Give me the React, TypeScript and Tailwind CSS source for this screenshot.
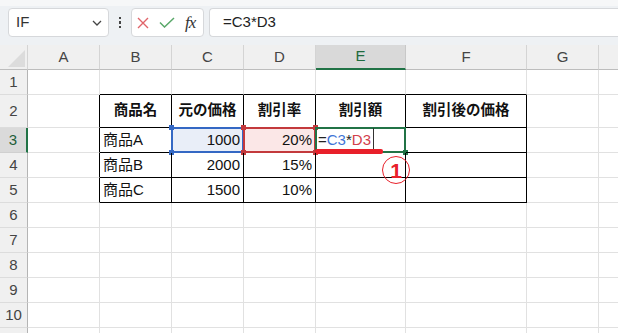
import React from 'react'

const COLS = ['A', 'B', 'C', 'D', 'E', 'F', 'G', '']
const WIDTHS = ['w-[72px]', 'w-[72px]', 'w-[72px]', 'w-[72px]', 'w-[90px]', 'w-[121px]', 'w-[72px]', 'w-[100px]']

type Cell = { text?: string; bold?: boolean; align?: 'left' | 'right' | 'center' }

const data: Record<number, Cell[]> = {
  2: [{}, { text: '商品名', bold: true, align: 'center' }, { text: '元の価格', bold: true, align: 'center' }, { text: '割引率', bold: true, align: 'center' }, { text: '割引額', bold: true, align: 'center' }, { text: '割引後の価格', bold: true, align: 'center' }],
  3: [{}, { text: '商品A' }, { text: '1000', align: 'right' }, { text: '20%', align: 'right' }, {}, {}],
  4: [{}, { text: '商品B' }, { text: '2000', align: 'right' }, { text: '15%', align: 'right' }, {}, {}],
  5: [{}, { text: '商品C' }, { text: '1500', align: 'right' }, { text: '10%', align: 'right' }, {}, {}],
}

const ROWS = [1, 2, 3, 4, 5, 6, 7, 8, 9, 10, 11]

function borderClass(row: number, col: number) {
  const inTable = row >= 2 && row <= 5 && col >= 1 && col <= 5
  if (inTable) return 'border-r border-b border-r-black border-b-black'
  if (row >= 2 && row <= 5 && col === 0) return 'border-r border-b border-r-black border-b-[#e1e1e1]'
  if (row === 1 && col >= 1 && col <= 5) return 'border-r border-b border-r-[#e1e1e1] border-b-black'
  return 'border-r border-b border-[#e1e1e1]'
}

function Handle({ className }: { className: string }) {
  return <div className={`absolute w-[5px] h-[5px] ${className}`} />
}

function Overlay({ row, col }: { row: number; col: number }) {
  if (row !== 3) return null
  if (col === 2)
    return (
      <div className="absolute left-[-1px] top-[-1px] w-[73px] h-[26px] border-2 border-[#3468c4]">
        <Handle className="left-[-4px] top-[-4px] bg-[#3468c4]" />
        <Handle className="left-[-4px] bottom-[-4px] bg-[#3468c4]" />
      </div>
    )
  if (col === 3)
    return (
      <div className="absolute left-[-1px] top-[-1px] w-[73px] h-[26px] border-2 border-[#c3393c]">
        <Handle className="left-[-4px] top-[-4px] bg-[#c3393c]" />
        <Handle className="left-[-4px] bottom-[-4px] bg-[#c3393c]" />
        <Handle className="right-[-4px] top-[-4px] bg-[#c3393c]" />
        <Handle className="right-[-4px] bottom-[-4px] bg-[#c3393c]" />
      </div>
    )
  if (col === 4)
    return (
      <>
        <div className="absolute left-[-1px] top-[-1px] w-[91px] h-[26px] border-2 border-[#217346]">
          <Handle className="right-[-4px] bottom-[-4px] bg-[#217346]" />
        </div>
        <div className="absolute left-[2px] top-0 h-[24px] flex items-center text-[15px] text-[#222]">
          <span>=</span>
          <span className="text-[#3f74d6]">C3</span>
          <span>*</span>
          <span className="text-[#d2404a]">D3</span>
        </div>
        <div className="absolute left-[57px] top-0 h-[23px] w-px bg-[#333]" />
        <div className="absolute left-[-1px] top-[21px] w-[68px] h-[5px] rounded-[2px] bg-[#e8202a]" />
        <div className="absolute left-[66px] top-[28px] w-[28px] h-[28px] rounded-full border-[1.5px] border-[#e8202a] flex items-center justify-center text-[#e8202a] text-[21px] font-bold leading-none z-10">
          1
        </div>
      </>
    )
  return null
}

export default function App() {
  return (
    <div className="w-[618px] h-[333px] overflow-hidden bg-white font-['Liberation_Sans','Noto_Sans_CJK_JP',sans-serif] text-[#222]">
      {/* formula bar */}
      <div className="h-[45px] bg-[#eef1f4] border-t-[6px] border-[#f6f7f8] flex items-start pt-[2px] pl-[8px]">
        <div className="w-[101px] h-[29px] bg-white rounded-[4px] border border-[#d6d8db] flex items-center pl-[7px] pr-[6px]">
          <span className="text-[15px] text-[#333] flex-1">IF</span>
          <svg width="10" height="6" viewBox="0 0 10 6" fill="none" stroke="#444" strokeWidth="1.3">
            <path d="M1 1l4 4 4-4" />
          </svg>
        </div>
        <div className="w-[22px] h-[29px] flex flex-col items-center justify-center gap-[2px]">
          <div className="w-[2.5px] h-[2.5px] bg-[#444]" />
          <div className="w-[2.5px] h-[2.5px] bg-[#444]" />
          <div className="w-[2.5px] h-[2.5px] bg-[#444]" />
        </div>
        <div className="w-[73px] h-[29px] bg-white rounded-[4px] border border-[#d6d8db] flex items-center pl-[5px] gap-[10px]">
          <svg width="12" height="12" viewBox="0 0 12 12" stroke="#e0646a" strokeWidth="1.4" fill="none">
            <path d="M1 1l10 10M11 1L1 11" />
          </svg>
          <svg width="16" height="11" viewBox="0 0 16 11" stroke="#5aa86a" strokeWidth="1.5" fill="none">
            <path d="M1 5.5l4.5 4.5L15 1" />
          </svg>
          <span className="font-['Liberation_Serif',serif] italic text-[17px] text-[#333] leading-none tracking-[-1px]">fx</span>
        </div>
        <div className="ml-[5px] flex-1 h-[29px] bg-white rounded-l-[4px] border border-r-0 border-[#d6d8db] flex items-center pl-[13px]">
          <span className="text-[15px] text-[#222]">=C3*D3</span>
        </div>
      </div>

      {/* column headers */}
      <div className="flex h-[25px]">
        <div className="w-[28px] shrink-0 bg-[#f0f0f0] border-r border-b border-r-[#d4d4d4] border-b-[#bdbdbd] relative overflow-hidden">
          <svg className="absolute right-[2px] bottom-[2px]" width="17" height="17" viewBox="0 0 17 17">
            <path d="M17 0V17H0Z" fill="#dcdcdc" />
          </svg>
        </div>
        {COLS.map((c, i) =>
          c === 'E' ? (
            <div key={i} className={`${WIDTHS[i]} shrink-0 bg-[#d9d9d9] border-r border-b-2 border-r-[#c8c8c8] border-b-[#217346] flex items-center justify-center text-[15px] text-[#1e6b3e]`}>
              {c}
            </div>
          ) : (
            <div key={i} className={`${WIDTHS[i]} shrink-0 bg-[#f0f0f0] border-r border-b border-r-[#d4d4d4] border-b-[#bdbdbd] flex items-center justify-center text-[15px] text-[#444]`}>
              {c}
            </div>
          )
        )}
      </div>

      {/* rows */}
      {ROWS.map((r) => (
        <div key={r} className={`flex ${r === 2 ? 'h-[33px]' : 'h-[25px]'}`}>
          {r === 3 ? (
            <div className="w-[28px] shrink-0 bg-[#dadada] border-r-2 border-b border-r-[#217346] border-b-[#d0d0d0] flex items-center justify-center text-[15px] text-[#1e5e38]">
              {r}
            </div>
          ) : (
            <div className="w-[28px] shrink-0 bg-[#f0f0f0] border-r border-b border-r-[#b4b4b4] border-b-[#dcdcdc] flex items-center justify-center text-[15px] text-[#444]">
              {r < 11 ? r : ''}
            </div>
          )}
          {COLS.map((_, ci) => {
            const cell = data[r]?.[ci] ?? {}
            const fill = r === 3 && ci === 2 ? 'bg-[#e9eef8]' : r === 3 && ci === 3 ? 'bg-[#fbe7e7]' : ''
            const align = cell.align === 'right' ? 'justify-end pr-[3px]' : cell.align === 'center' ? 'justify-center' : 'justify-start pl-[3px]'
            return (
              <div key={ci} className={`${WIDTHS[ci]} shrink-0 relative flex items-center ${align} ${fill} ${borderClass(r, ci)}`}>
                {cell.text && (
                  <span className={`${cell.bold ? 'font-bold text-[14.5px]' : 'text-[15px]'} text-[#111] whitespace-nowrap`}>{cell.text}</span>
                )}
                <Overlay row={r} col={ci} />
              </div>
            )
          })}
        </div>
      ))}
    </div>
  )
}
